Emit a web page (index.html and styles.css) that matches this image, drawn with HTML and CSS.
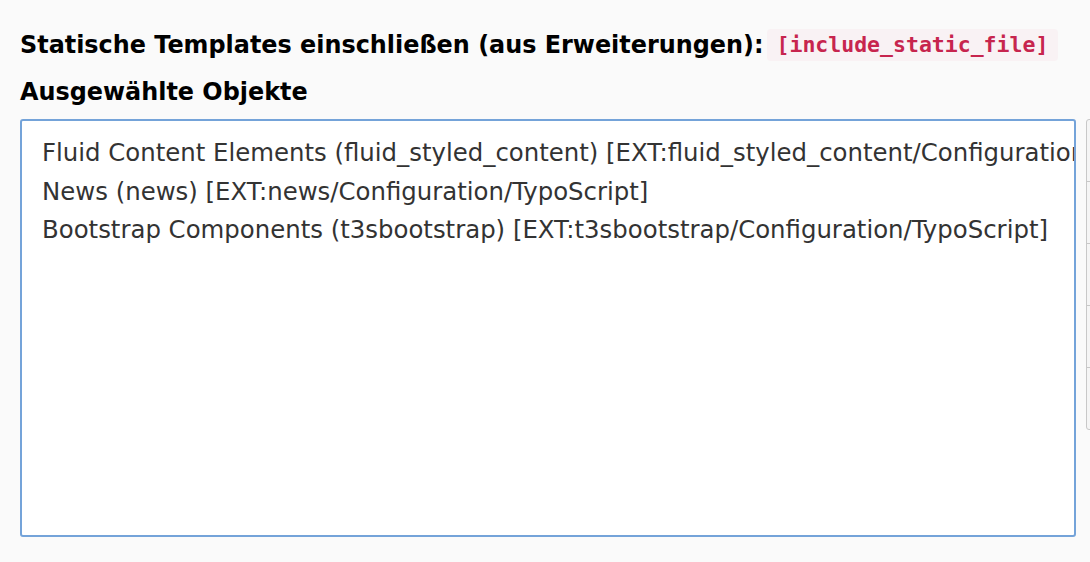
FILE: index.html
```html
<!DOCTYPE html>
<html lang="de">
<head>
<meta charset="utf-8">
<title>Statische Templates</title>
<link rel="stylesheet" href="styles.css">
</head>
<body>
<div class="page">
  <div class="field-title">
    <span class="title-text">Statische Templates einschließen (aus Erweiterungen):</span>
    <code class="field-name">[include_static_file]</code>
  </div>
  <div class="sub-label">Ausgewählte Objekte</div>
  <div class="select-row">
    <div class="select-box">
      <div class="option">Fluid Content Elements (fluid_styled_content) [EXT:fluid_styled_content/Configuration/TypoScript]</div>
      <div class="option">News (news) [EXT:news/Configuration/TypoScript]</div>
      <div class="option">Bootstrap Components (t3sbootstrap) [EXT:t3sbootstrap/Configuration/TypoScript]</div>
    </div>
    <div class="btn-group">
      <div class="btn"></div>
      <div class="btn"></div>
      <div class="btn"></div>
      <div class="btn"></div>
      <div class="btn"></div>
    </div>
  </div>
</div>
</body>
</html>
```
FILE: styles.css
```css
html, body {
  margin: 0;
  padding: 0;
  background: #fafafa;
  overflow: hidden;
}
body {
  font-family: "DejaVu Sans", Verdana, sans-serif;
  color: #000;
}
.page {
  padding: 27px 0 0 20px;
  width: 1400px;
}
.field-title {
  display: flex;
  align-items: center;
  gap: 3px;
  font-weight: bold;
  font-size: 23.9px;
  line-height: 36px;
}
.field-name {
  font-family: "DejaVu Sans Mono", "Liberation Mono", monospace;
  font-size: 21.5px;
  font-weight: bold;
  color: #c7254e;
  background: #f9f2f4;
  border-radius: 4px;
  padding: 0 10px;
  line-height: 32px;
}
.sub-label {
  font-weight: bold;
  font-size: 23.9px;
  line-height: 36px;
  margin-top: 11px;
}
.select-row {
  display: flex;
  align-items: flex-start;
  gap: 10px;
  margin-top: 9px;
}
.select-box {
  box-sizing: border-box;
  width: 1056px;
  height: 418px;
  background: #fff;
  border: 2px solid #74a3d9;
  border-radius: 3px;
  padding: 13px 0 0 20px;
  overflow: hidden;
}
.option {
  font-size: 24.4px;
  line-height: 38.5px;
  color: #333;
  white-space: nowrap;
  overflow: hidden;
}
.btn-group {
  display: flex;
  flex-direction: column;
  width: 60px;
  border: 1px solid #c8c8c8;
  border-radius: 3px;
  background: #f5f5f5;
}
.btn {
  height: 61px;
  border-bottom: 1px solid #c8c8c8;
}
.btn:last-child {
  border-bottom: 0;
}
```
